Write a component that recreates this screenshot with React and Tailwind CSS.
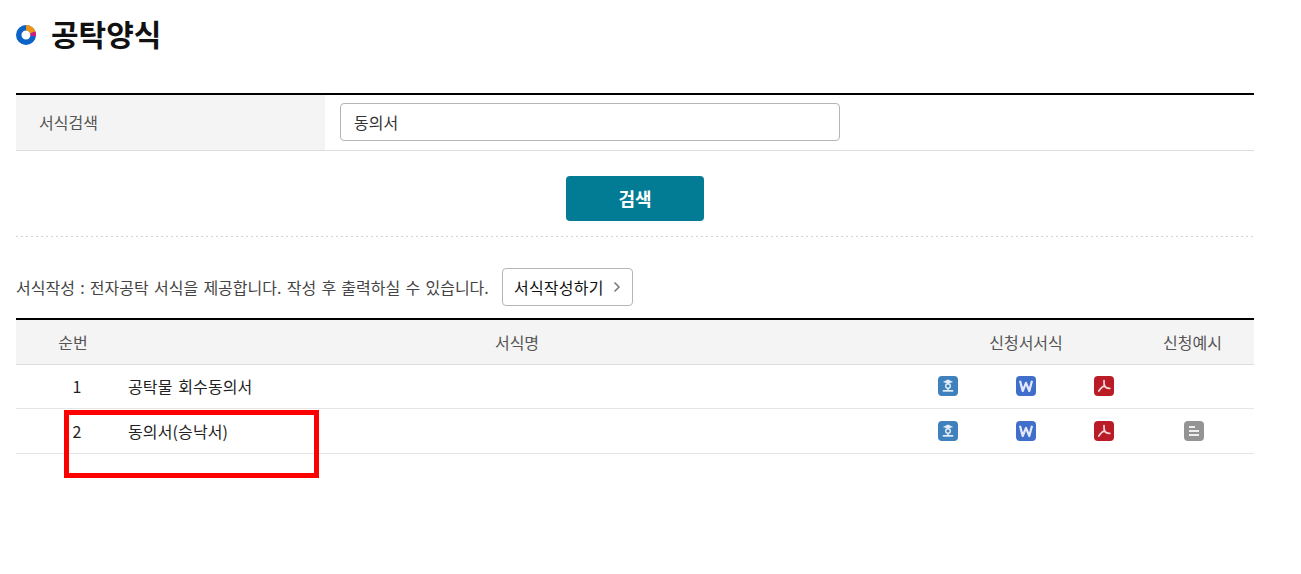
const font = { fontFamily: '"Noto Sans CJK KR", "Noto Sans", sans-serif' };

function HwpIcon() {
  return (
    <svg width="20" height="20" viewBox="0 0 20 20" className="block">
      <rect width="20" height="20" rx="4" fill="#3f81bd" />
      <path d="M4.800 6 10 3.400 15.200 6 10 7.400z" fill="#e4eef7" />
      <circle cx="10" cy="10" r="2.300" fill="none" stroke="#e4eef7" strokeWidth="1.400" />
      <rect x="9.200" y="12" width="1.600" height="2.200" fill="#e4eef7" />
      <rect x="4.800" y="14" width="10.400" height="1.700" fill="#e4eef7" />
    </svg>
  );
}

function WordIcon() {
  return (
    <svg width="20" height="20" viewBox="0 0 20 20" className="block">
      <rect width="20" height="20" rx="4" fill="#3f6ecb" />
      <path d="M4 4.800 6.700 15 10 6.800 13.300 15 16 4.800" fill="none" stroke="#e3e9f8" strokeWidth="2.200" strokeLinejoin="round" />
    </svg>
  );
}

function PdfIcon() {
  return (
    <svg width="20" height="20" viewBox="0 0 20 20" className="block">
      <rect width="20" height="20" rx="4" fill="#b91c26" />
      <path d="M10 4.500c-.2 2.600.2 5 1.200 6.400 1.200 1.300 3 1.500 4.600 1.400M10.800 9.800c-1.600.2-3.800 2-6 5.200" fill="none" stroke="#f3d9db" strokeWidth="1.700" strokeLinecap="round" strokeLinejoin="round" />
    </svg>
  );
}

function DocIcon() {
  return (
    <svg width="20" height="20" viewBox="0 0 20 20" className="block">
      <rect width="20" height="20" rx="4" fill="#949494" />
      <rect x="5" y="5" width="6" height="2" fill="#eeeeee" />
      <rect x="5" y="9" width="10" height="2" fill="#eeeeee" />
      <rect x="5" y="13" width="10" height="2" fill="#eeeeee" />
    </svg>
  );
}

function Ring() {
  return (
    <svg width="20" height="20" viewBox="0 0 20 20" className="mt-[4px] block">
      <circle cx="10" cy="10" r="7.250" fill="none" stroke="#0b63c5" strokeWidth="5.500" />
      <path d="M10 2.750A7.250 7.250 0 0 1 16.800 7.500" fill="none" stroke="#f39314" strokeWidth="5.500" />
      <path d="M16.800 7.500A7.250 7.250 0 0 1 17.200 11" fill="none" stroke="#d6197f" strokeWidth="5.500" />
    </svg>
  );
}

function Row({ n, name, doc, height }) {
  return (
    <tr className={`${height} border-b border-[#e5e5e5] text-[16px] text-[#222222]`}>
      <td className="pl-[10px] text-center align-middle">{n}</td>
      <td className="align-middle tracking-[0.120px]">{name}</td>
      <td><div className="flex justify-center"><HwpIcon /></div></td>
      <td><div className="flex justify-center"><WordIcon /></div></td>
      <td><div className="flex justify-center"><PdfIcon /></div></td>
      <td className="pr-[9px]">{doc && <div className="flex justify-center"><DocIcon /></div>}</td>
    </tr>
  );
}

export default function App() {
  return (
    <div className="relative h-[574px] w-[1301px] overflow-hidden bg-white pl-4 [word-spacing:2px]" style={font}>
      <div className="w-[1238px]">
        <h1 className="flex h-[66px] items-center gap-[15px] text-[30px] font-bold text-[#111111]">
          <Ring />
          <span className="leading-none">공탁양식</span>
        </h1>

        <div className="mt-[27px] flex h-[58px] border-t-2 border-b border-t-black border-b-[#dddddd]">
          <div className="flex w-[309px] items-center bg-[#f4f4f4] pb-[2px] pl-[23px] text-[16px] text-[#555555]">서식검색</div>
          <div className="pl-[15px] pt-[8px]">
            <input
              readOnly
              value="동의서"
              className="h-[38px] w-[500px] rounded-[4px] border border-[#b5b5b5] px-[13px] text-[16px] text-[#333333] outline-none"
            />
          </div>
        </div>

        <div className="mt-[25px] flex justify-center">
          <button className="h-[45px] w-[138px] rounded-[4px] bg-[#017c94] text-[18px] font-bold text-white">검색</button>
        </div>

        <div className="mt-[15px] h-px bg-[repeating-linear-gradient(90deg,#d4d4d4_0,#d4d4d4_2px,transparent_2px,transparent_5px)]" />

        <div className="mt-[31px] flex h-[38px] items-center gap-[13px]">
          <span className="text-[16px] text-[#444444] [word-spacing:1.670px]">서식작성 : 전자공탁 서식을 제공합니다. 작성 후 출력하실 수 있습니다.</span>
          <button className="flex h-[38px] w-[131px] items-center justify-center gap-[9px] rounded-[4px] border border-[#b5b5b5] text-[16px] font-normal tracking-[0.200px] text-[#111111]">
            서식작성하기
            <svg width="8" height="12" viewBox="0 0 8 12" className="block">
              <path d="M1.500 1.500 6 6l-4.500 4.500" fill="none" stroke="#777777" strokeWidth="1.500" />
            </svg>
          </button>
        </div>

        <table className="mt-[12px] w-[1238px] table-fixed border-collapse border-t-2 border-t-black">
          <colgroup>
            <col className="w-[112px]" />
            <col className="w-[781px]" />
            <col className="w-[78px]" />
            <col className="w-[78px]" />
            <col className="w-[78px]" />
            <col className="w-[111px]" />
          </colgroup>
          <thead>
            <tr className="h-[45px] border-b border-[#dddddd] bg-[#f4f4f4] text-[16px] font-normal text-[#555555]">
              <th className="pl-[2px] font-normal">순번</th>
              <th className="pr-[3px] font-normal">서식명</th>
              <th colSpan={3} className="font-normal">신청서서식</th>
              <th className="pr-[12px] font-normal">신청예시</th>
            </tr>
          </thead>
          <tbody>
            <Row n="1" name="공탁물 회수동의서" height="h-[44px]" />
            <Row n="2" name="동의서(승낙서)" doc height="h-[45px]" />
          </tbody>
        </table>
      </div>

      <div className="absolute left-[64px] top-[410px] h-[68px] w-[255px] border-[5px] border-[#ff0000]" />
    </div>
  );
}
